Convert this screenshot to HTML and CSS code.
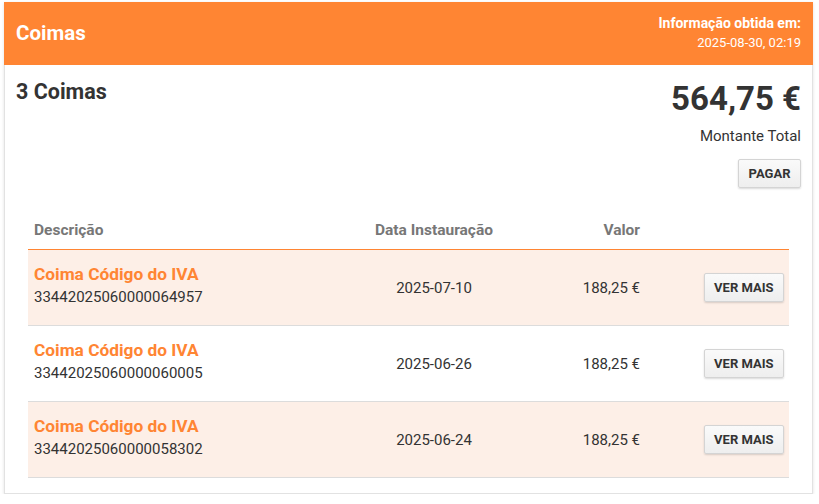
FILE: index.html
```html
<!DOCTYPE html>
<html lang="pt">
<head>
<meta charset="utf-8">
<link rel="stylesheet" href="styles.css">
</head>
<body>
<div class="card">
  <div class="card-header">
    <div class="title">Coimas</div>
    <div class="info">
      <div class="info-label">Informação obtida em:</div>
      <div class="info-date">2025-08-30, 02:19</div>
    </div>
  </div>
  <div class="card-body">
    <div class="summary">
      <div class="count">3 Coimas</div>
      <div class="total">
        <div class="amount">564,75 €</div>
        <div class="amount-label">Montante Total</div>
        <button class="btn">PAGAR</button>
      </div>
    </div>
    <div class="table">
      <div class="row head">
        <div class="c1">Descrição</div>
        <div class="c2">Data Instauração</div>
        <div class="c3">Valor</div>
        <div class="c4"></div>
      </div>
      <div class="row alt">
        <div class="c1"><div class="name">Coima Código do IVA</div><div class="num">33442025060000064957</div></div>
        <div class="c2">2025-07-10</div>
        <div class="c3">188,25 €</div>
        <div class="c4"><button class="btn">VER MAIS</button></div>
      </div>
      <div class="row">
        <div class="c1"><div class="name">Coima Código do IVA</div><div class="num">33442025060000060005</div></div>
        <div class="c2">2025-06-26</div>
        <div class="c3">188,25 €</div>
        <div class="c4"><button class="btn">VER MAIS</button></div>
      </div>
      <div class="row alt">
        <div class="c1"><div class="name">Coima Código do IVA</div><div class="num">33442025060000058302</div></div>
        <div class="c2">2025-06-24</div>
        <div class="c3">188,25 €</div>
        <div class="c4"><button class="btn">VER MAIS</button></div>
      </div>
    </div>
  </div>
</div>
</body>
</html>
```
FILE: styles.css
```css
* { box-sizing: border-box; }
body {
  margin: 0;
  background: #fff;
  font-family: Roboto, "Liberation Sans", sans-serif;
  color: #333;
}
.card {
  margin: 2px 0 0 4px;
  width: 809px;
  height: 492px;
  background: #fff;
  border: 1px solid #e2e2e2;
  box-shadow: 0 1px 3px rgba(0,0,0,0.12);
}
.card-header {
  background: #ff8533;
  height: 63px;
  margin: -1px -1px 0 -1px;
  padding: 0 12px;
  display: flex;
  justify-content: space-between;
  align-items: center;
  color: #fff;
}
.title {
  font-size: 20.5px;
  font-weight: 700;
  padding-bottom: 1px;
}
.info {
  text-align: right;
  margin-top: -2px;
}
.info-label {
  font-size: 14px;
  font-weight: 700;
  line-height: 20px;
}
.info-date {
  font-size: 13px;
  line-height: 20px;
}
.card-body {
  padding: 12px 11px 0 11px;
}
.summary {
  display: flex;
  justify-content: space-between;
  align-items: flex-start;
}
.count {
  font-size: 21.5px;
  font-weight: 700;
  line-height: 30px;
}
.total {
  text-align: right;
  display: flex;
  flex-direction: column;
  align-items: flex-end;
}
.amount {
  font-size: 33px;
  font-weight: 700;
  line-height: 44px;
}
.amount-label {
  font-size: 15px;
  line-height: 20px;
  margin-top: 5px;
}
.btn {
  font-family: Roboto, "Liberation Sans", sans-serif;
  font-size: 13px;
  font-weight: 700;
  color: #333;
  background: linear-gradient(#fafafa, #eeeeee);
  border: 1px solid #d4d4d4;
  border-radius: 2px;
  box-shadow: 0 1px 2px rgba(0,0,0,0.15);
  padding: 0 9.5px;
  height: 29px;
}
.total .btn {
  margin-top: 13px;
}
.table {
  margin: 23px 12px 0 12px;
}
.row {
  display: grid;
  grid-template-columns: 343px 126px 149px 145px;
  align-items: center;
  height: 76px;
  border-bottom: 1px solid #dcdcdc;
  font-size: 15px;
}
.row.alt { background: #fdefe7; }
.row.head {
  height: 39px;
  border-bottom: 1px solid #ff8533;
  color: #777;
  font-weight: 700;
  font-size: 15.5px;
}
.c1 { padding-left: 6px; }
.row:not(.head) .c1 { padding-bottom: 3px; }
.c2 { text-align: center; }
.c3 { text-align: right; padding-right: 6px; }
.c4 { text-align: right; padding-right: 7px; }
.name {
  color: #ff8533;
  font-weight: 700;
  font-size: 17.3px;
  line-height: 23px;
}
.num {
  font-size: 15px;
  line-height: 23px;
}
```
